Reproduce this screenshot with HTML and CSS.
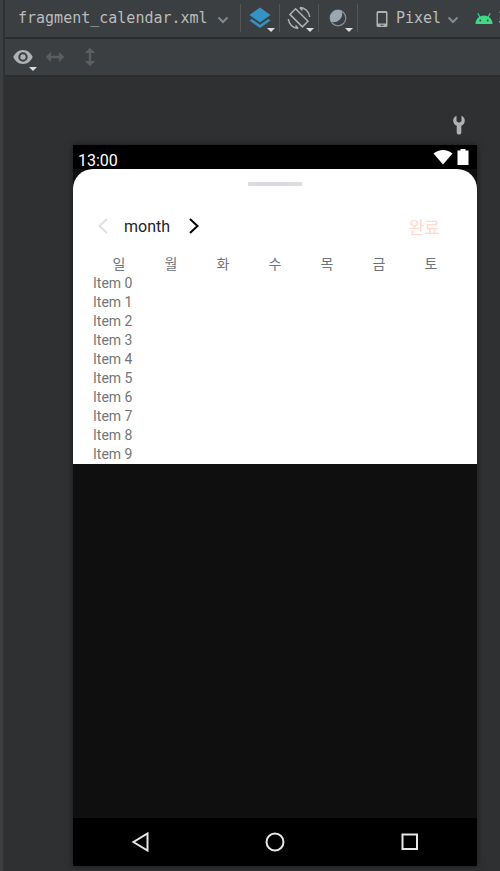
FILE: index.html
```html
<!DOCTYPE html>
<html lang="ko">
<head>
    <meta charset="UTF-8">
    <meta name="viewport" content="width=device-width, initial-scale=1.0">
    <title>fragment_calendar.xml</title>
    <link rel="stylesheet" href="styles.css">
</head>
<body>
    <div class="editor">
        <!-- File, theme and device options -->
        <header class="toolbar">
            <button class="file-button" type="button">
                fragment_calendar.xml
                <svg class="chevron" viewBox="0 0 12 8"><path d="M1.5 1.5 6 6l4.500-4.500"/></svg>
            </button>
            <button class="tool-button" type="button" aria-label="Select design surface">
                <svg class="tool-icon" viewBox="0 0 24 24">
                    <path fill="#3592c4" d="M12 1.500 22.500 9 12 16.500 1.500 9z"/>
                    <path fill="#3592c4" d="M1.500 14.500 3.700 13 12 18.800 20.300 13l2.200 1.500L12 22z"/>
                </svg>
                <span class="arrow"></span>
            </button>
            <button class="tool-button" type="button" aria-label="Orientation">
                <svg class="tool-icon" viewBox="0 0 24 24" fill="none" stroke="#afb1b3" stroke-width="1.5">
                    <path d="M8.600 2.700 21 15.300 15.400 20.900 2.900 8.400z"/>
                    <path d="M13 1.500c5 .2 9 3.800 9.700 9.500M15.500 4.500 12.800 1.500M11 22.500C6 22.300 2 18.500 1.300 13M8.500 19.500l2.700 3"/>
                </svg>
                <span class="arrow"></span>
            </button>
            <button class="tool-button" type="button" aria-label="Night mode">
                <svg class="tool-icon" viewBox="0 0 24 24">
                    <circle cx="12" cy="12" r="7.800" fill="none" stroke="#87939a" stroke-width="1.200"/>
                    <path fill="#9aa7b0" d="M15.800 5.200A7.800 7.800 0 0 0 5.200 15.800 8.500 8.500 0 0 0 15.800 5.200z"/>
                </svg>
                <span class="arrow"></span>
            </button>
            <button class="device-button" type="button">
                <svg class="device-icon" viewBox="0 0 12 18">
                    <path fill="#afb1b3" fill-rule="evenodd" d="M2 1h8a1.500 1.500 0 0 1 1.500 1.500v13A1.500 1.500 0 0 1 10 17H2a1.500 1.500 0 0 1-1.500-1.500v-13A1.500 1.500 0 0 1 2 1zM2 3v10.500h8V3zM4.500 14.700v1h3v-1z"/>
                </svg>
                Pixel
                <svg class="chevron" viewBox="0 0 12 8"><path d="M1.500 1.500 6 6l4.500-4.500"/></svg>
            </button>
            <button class="api-button" type="button">
                <svg class="android-icon" viewBox="0 0 18 12">
                    <path fill="#3ddc84" d="M.5 12a8.500 8.500 0 0 1 3.700-6.900L2.300 1.500l1-.6 2 3.500a9.500 9.500 0 0 1 7.400 0l2-3.500 1 .6-1.900 3.600A8.500 8.500 0 0 1 17.500 12z"/>
                    <circle cx="5.300" cy="8.500" r=".9" fill="#3c3f41"/>
                    <circle cx="12.700" cy="8.500" r=".9" fill="#3c3f41"/>
                </svg>
                30
            </button>
        </header>

        <div class="toolbar view-bar">
            <button class="view-button" type="button" aria-label="View options">
                <svg class="view-icon" viewBox="0 0 20 20">
                    <path fill="#afb1b3" fill-rule="evenodd" d="M10 3c4.400 0 8 2.800 9.700 7-1.700 4.200-5.300 7-9.700 7S2 14.200.3 10C2 5.800 5.600 3 10 3zM10 5.300a4.700 4.700 0 1 0 0 9.400 4.700 4.700 0 0 0 0-9.400z"/>
                    <circle cx="10" cy="10" r="2.700" fill="#afb1b3"/>
                </svg>
                <span class="arrow"></span>
            </button>
            <button class="view-button" type="button" aria-label="Expand horizontally" disabled>
                <svg class="view-icon" viewBox="0 0 20 20"><path fill="#5b5d5f" d="M.7 10 6 4.800v4h8v-4l5.300 5.200-5.300 5.200v-4H6v4z"/></svg>
            </button>
            <button class="view-button" type="button" aria-label="Expand vertically" disabled>
                <svg class="view-icon" viewBox="0 0 20 20"><path fill="#5b5d5f" d="M10 .7 15.200 6h-4v8h4L10 19.300 4.800 14h4V6h-4z"/></svg>
            </button>
        </div>

        <main class="canvas">
            <button class="wrench-button" type="button" aria-label="Show issues">
                <svg class="view-icon" viewBox="0 0 20 20">
                    <path fill="#afb1b3" d="M7.500.8v5.400L10 7.800l2.500-1.600V.8c2 .8 3.300 2.700 3.300 4.900 0 2.200-1.300 4.100-3.500 5v7A1.800 1.800 0 0 1 10.500 19.500h-1a1.800 1.800 0 0 1-1.800-1.800v-7c-2.200-.9-3.500-2.800-3.500-5 0-2.200 1.300-4.100 3.300-4.900z"/>
                </svg>
            </button>

            <div class="phone">
                <div class="status-bar">
                    <span>13:00</span>
                    <svg class="wifi-icon" viewBox="0 0 20 16"><path fill="#fff" d="M.5 4.500C6-.2 14-.2 19.500 4.500L10 15.500z"/></svg>
                    <svg class="battery-icon" viewBox="0 0 12 16"><path fill="#fff" d="M.5 1.500H3.500V0h5v1.500h3V16H.5z"/></svg>
                </div>

                <div class="screen">
                    <section class="sheet">
                        <div class="handle"></div>
                        <div class="month-row">
                            <button class="month-button" type="button" aria-label="Previous month">
                                <svg class="month-arrow" viewBox="0 0 12 18"><path stroke="#dee2e6" d="M10 2 2.500 9l7.500 7"/></svg>
                            </button>
                            <span class="month">month</span>
                            <button class="month-button" type="button" aria-label="Next month">
                                <svg class="month-arrow" viewBox="0 0 12 18"><path stroke="#000" d="M2 2l7.500 7L2 16"/></svg>
                            </button>
                            <button class="done-button" type="button">완료</button>
                        </div>
                        <div class="weekdays">
                            <span>일</span>
                            <span>월</span>
                            <span>화</span>
                            <span>수</span>
                            <span>목</span>
                            <span>금</span>
                            <span>토</span>
                        </div>
                        <ul class="items">
                            <li>Item 0</li>
                            <li>Item 1</li>
                            <li>Item 2</li>
                            <li>Item 3</li>
                            <li>Item 4</li>
                            <li>Item 5</li>
                            <li>Item 6</li>
                            <li>Item 7</li>
                            <li>Item 8</li>
                            <li>Item 9</li>
                        </ul>
                    </section>
                </div>

                <nav class="nav-bar">
                    <button class="nav-button" type="button" aria-label="Back">
                        <svg class="nav-icon" viewBox="0 0 20 20"><path d="M17.500 1.500v17L3.500 10z"/></svg>
                    </button>
                    <button class="nav-button" type="button" aria-label="Home">
                        <svg class="nav-icon" viewBox="0 0 20 20"><circle cx="10" cy="10" r="8.500"/></svg>
                    </button>
                    <button class="nav-button" type="button" aria-label="Recent apps">
                        <svg class="nav-icon" viewBox="0 0 20 20"><path d="M2.500 2.500h14.500v14.500H2.500z"/></svg>
                    </button>
                </nav>
            </div>
        </main>
    </div>
</body>
</html>
```
FILE: styles.css
```css
* {
    margin: 0;
    padding: 0;
    box-sizing: border-box;
}

body {
    background-color: #3c3f41;
    font-family: Roboto, "Noto Sans CJK KR", sans-serif;
}

button {
    display: flex;
    align-items: center;
    background: none;
    border: none;
    font: inherit;
    color: inherit;
    cursor: pointer;
}

svg {
    display: block;
    flex-shrink: 0;
}

.editor {
    display: flex;
    flex-direction: column;
    min-height: 100vh;
    margin-left: 3px;
    border-left: 2px solid #2f3133;
    overflow: hidden;
}

/* Toolbars */
.toolbar {
    display: flex;
    align-items: center;
    height: 39px;
    padding-bottom: 2px;
    background-color: #3c3f41;
    border-bottom: 2px solid #2b2b2b;
    color: #bbbbbb;
    font-family: "DejaVu Sans Mono", monospace;
    font-size: 15px;
}

.file-button {
    justify-content: space-between;
    width: 235px;
    padding: 0 11px 0 13px;
    flex-shrink: 0;
}

.chevron {
    width: 12px;
    height: 8px;
    margin-top: 4px;
    fill: none;
    stroke: #7f8b91;
    stroke-width: 2;
}

.tool-button {
    position: relative;
    justify-content: center;
    width: 39px;
    height: 28px;
    flex-shrink: 0;
    border-left: 1px solid #555555;
}

.tool-icon {
    width: 24px;
    height: 24px;
}

.arrow {
    position: absolute;
    right: 4px;
    bottom: 0;
    border: 4px solid transparent;
    border-top-color: #dddddd;
    border-bottom: none;
}

.device-button {
    gap: 8px;
    height: 28px;
    padding: 0 16px 0 18px;
    flex-shrink: 0;
    border-left: 1px solid #555555;
}

.device-icon {
    width: 12px;
    height: 18px;
    margin-top: 2px;
}

.device-button .chevron {
    margin-left: -2px;
}

.api-button {
    gap: 5px;
    flex-shrink: 0;
}

.android-icon {
    width: 18px;
    height: 12px;
}

.view-bar {
    gap: 12px;
    height: 38px;
    padding: 0 8px;
}

.view-button {
    position: relative;
    height: 24px;
}

.view-button:last-child {
    margin-left: 3px;
}

.view-icon {
    width: 20px;
    height: 20px;
}

.view-button .arrow {
    right: -4px;
    bottom: -2px;
}

/* Design surface */
.canvas {
    display: flex;
    flex-direction: column;
    flex: 1;
    padding: 38px 23px 5px 68px;
    background-color: #2e3032;
}

.wrench-button {
    align-self: flex-end;
    margin: 0 8px 10px;
}

.phone {
    display: flex;
    flex-direction: column;
    flex: 1;
    background-color: #000;
    box-shadow: 0 0 6px rgba(0, 0, 0, 0.5);
}

.status-bar {
    display: flex;
    align-items: center;
    gap: 4px;
    height: 24px;
    padding: 0 8px 0 5px;
    color: #fff;
    font-size: 16px;
}

.status-bar span {
    margin-right: auto;
    padding-top: 7px;
}

.wifi-icon {
    width: 20px;
    height: 16px;
}

.battery-icon {
    width: 12px;
    height: 16px;
}

.screen {
    flex: 1;
    background-color: #0f0f0f;
}

.sheet {
    padding: 13px 20px 0;
    background-color: #fff;
    border-radius: 20px 20px 0 0;
}

.handle {
    width: 54px;
    height: 4px;
    margin: 0 auto;
    background-color: #dadcdf;
}

.month-row {
    display: flex;
    align-items: center;
    gap: 15px;
    height: 48px;
    margin-top: 16px;
    padding: 0 17px 0 4px;
    color: #212529;
    font-size: 16px;
}

.month-arrow {
    width: 12px;
    height: 18px;
    fill: none;
    stroke-width: 2;
}

.month + .month-button {
    margin-left: 3px;
}

.done-button {
    margin-left: auto;
    color: #ffd8cf;
    font-size: 17px;
}

.weekdays {
    display: grid;
    grid-template-columns: repeat(7, 1fr);
    margin-top: 4px;
    color: #6c757d;
    font-size: 14px;
    line-height: 20px;
    text-align: center;
}

.items {
    list-style: none;
    color: #757575;
    font-size: 14px;
    line-height: 19px;
}

/* Android navigation */
.nav-bar {
    display: flex;
    justify-content: space-around;
    align-items: center;
    height: 48px;
}

.nav-icon {
    width: 20px;
    height: 20px;
    fill: none;
    stroke: #e6e6e6;
    stroke-width: 2;
}
```
